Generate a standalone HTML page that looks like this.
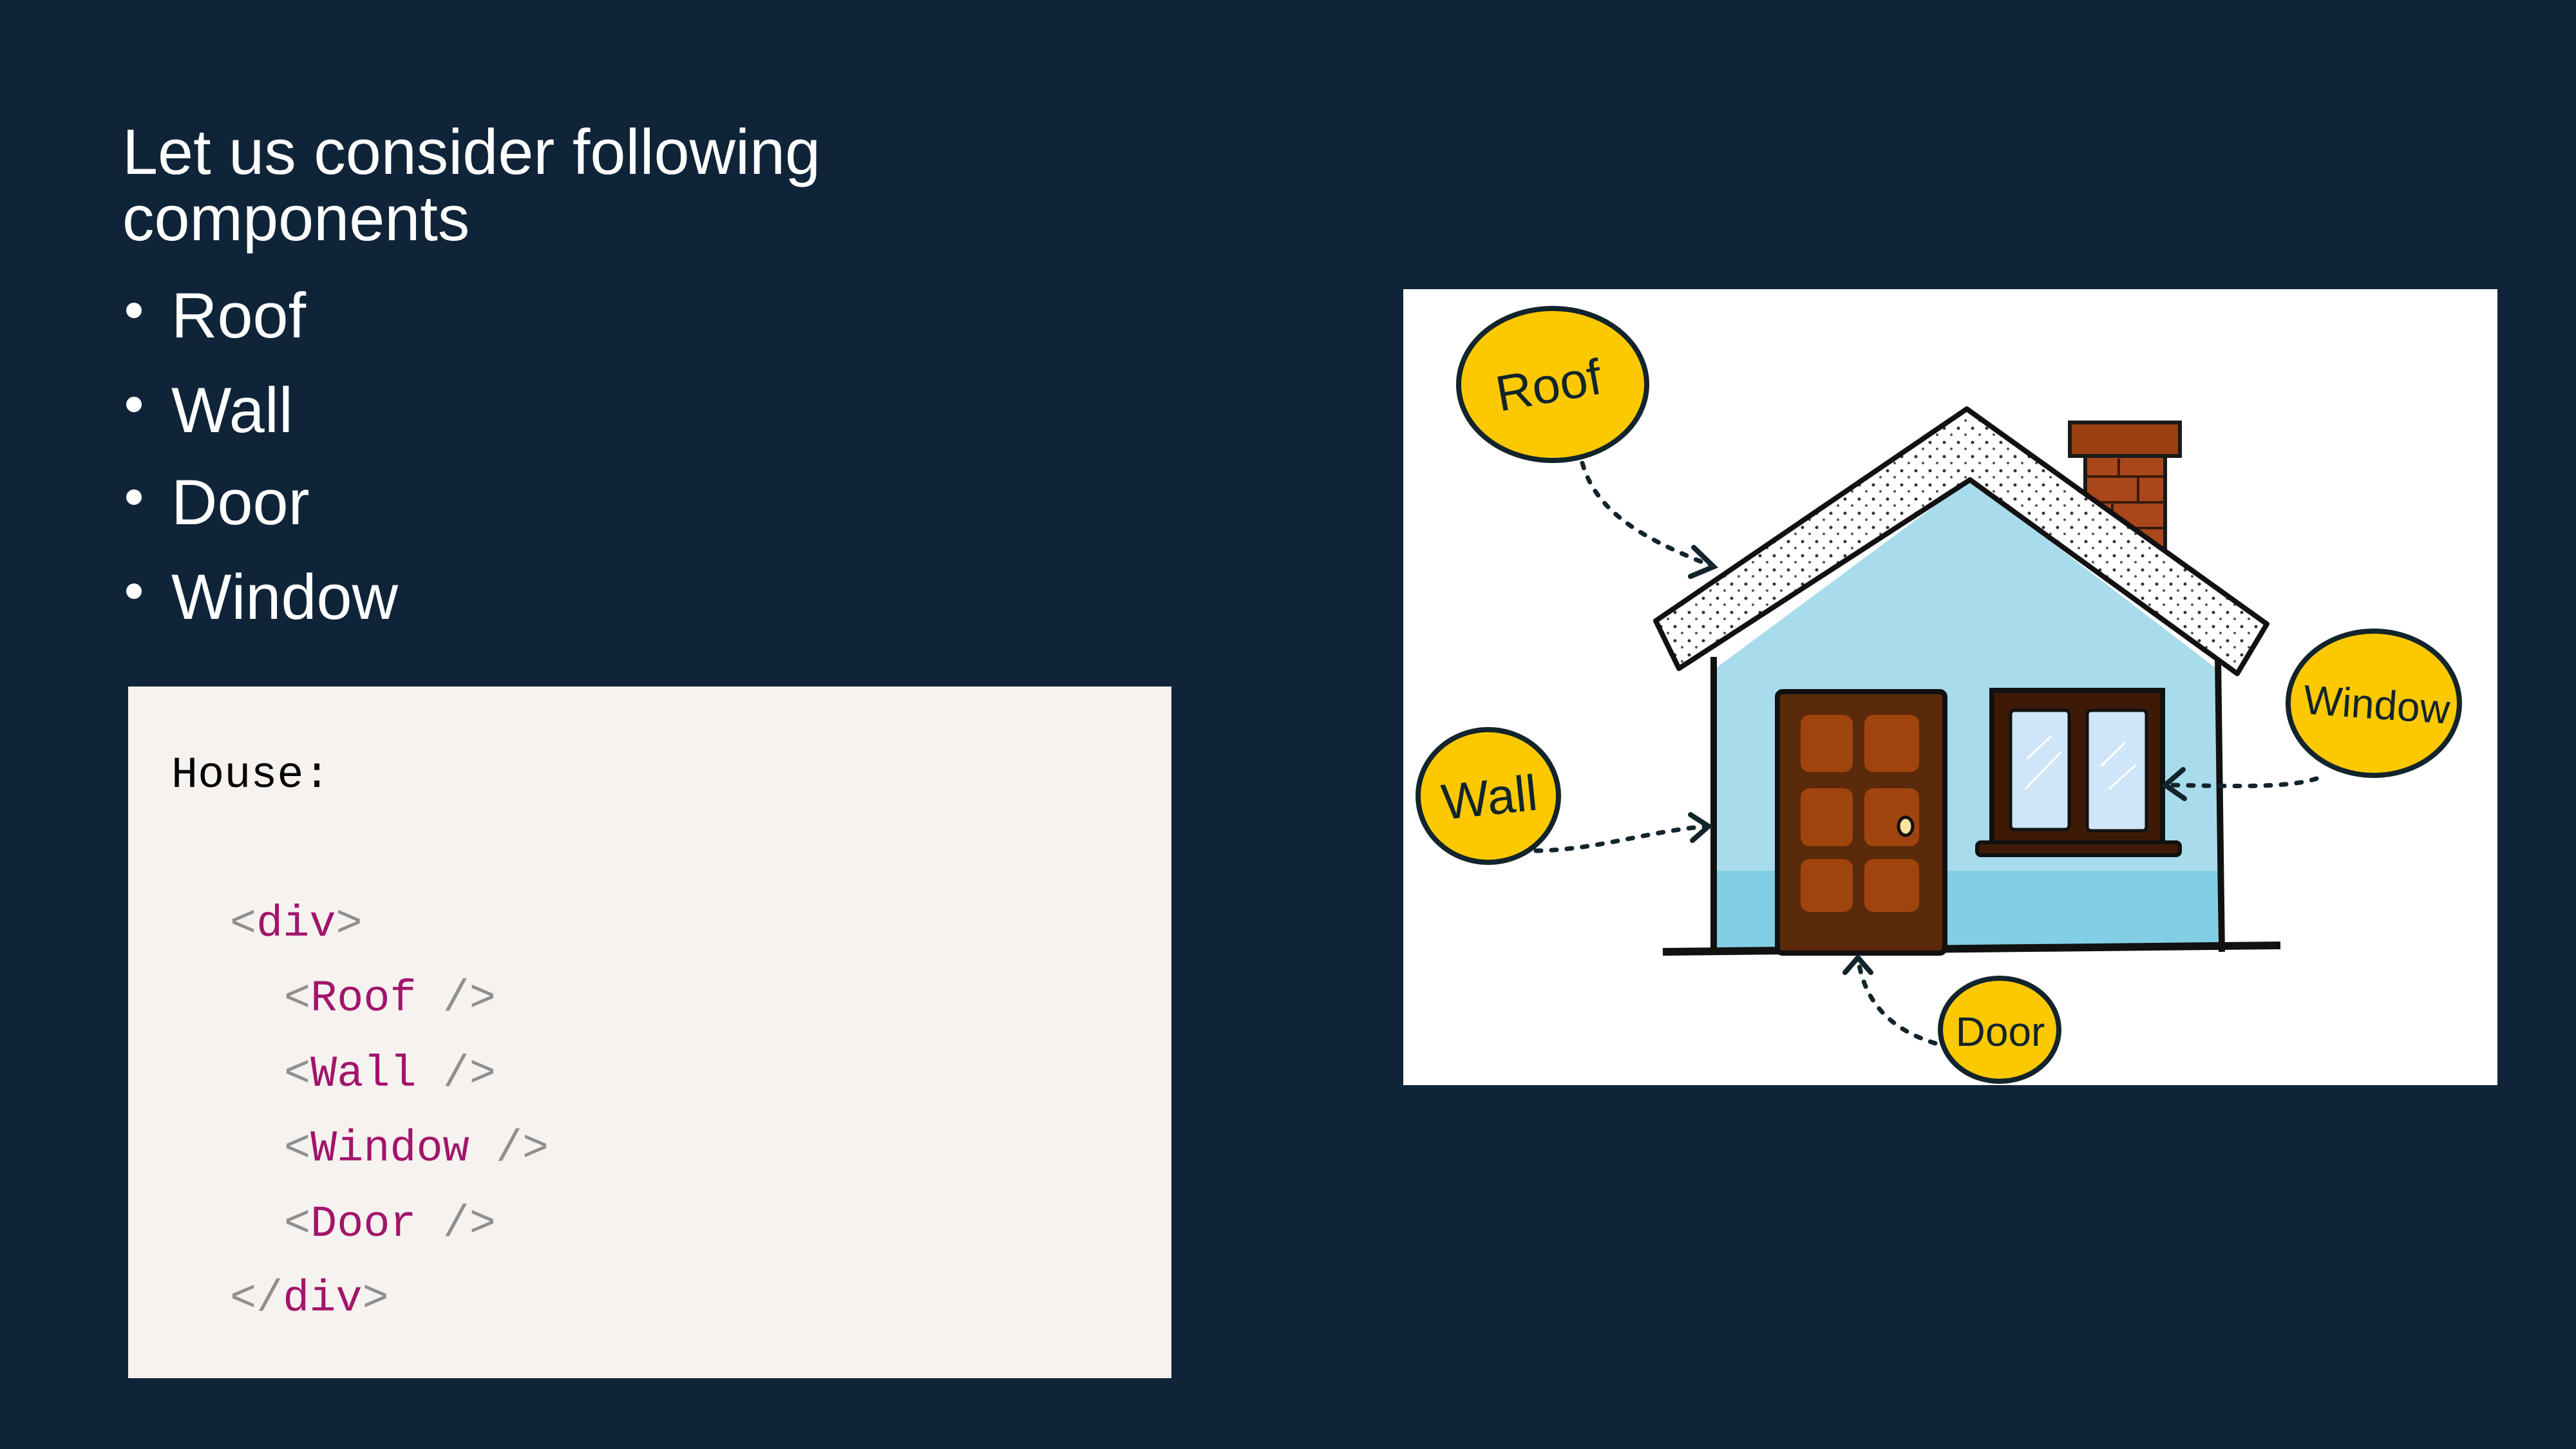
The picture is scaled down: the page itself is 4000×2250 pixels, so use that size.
<!DOCTYPE html>
<html><head><meta charset="utf-8"><style>
html,body{margin:0;padding:0}
body{width:4000px;height:2250px;background:#0f2438;position:relative;overflow:hidden;font-family:"Liberation Sans",sans-serif;color:#fff}
.t{position:absolute;left:190px;font-size:99px;letter-spacing:0;line-height:1;white-space:nowrap}
.b{position:absolute;left:266px;font-size:99px;letter-spacing:0;line-height:1;white-space:nowrap}
.dot{position:absolute;left:196px;width:24px;height:24px;border-radius:50%;background:#fff}
.code{position:absolute;left:199px;top:1066px;width:1620px;height:1074px;background:#f5f2ef}
.c{position:absolute;font-family:"Liberation Mono",monospace;font-size:68.5px;line-height:1;white-space:pre;color:#000}
.g{color:#8f8f8f}.p{color:#a3146b}
</style></head><body>
<div class="t" style="top:186px">Let us consider following</div>
<div class="t" style="top:289px">components</div>
<div class="dot" style="top:470px"></div><div class="b" style="top:440px">Roof</div>
<div class="dot" style="top:616px"></div><div class="b" style="top:587px">Wall</div>
<div class="dot" style="top:760px"></div><div class="b" style="top:730px">Door</div>
<div class="dot" style="top:906px"></div><div class="b" style="top:877px">Window</div>
<div class="code"></div>
<div class="c" style="left:266px;top:1170px">House:</div>
<div class="c" style="left:357px;top:1401px"><span class="g">&lt;</span><span class="p">div</span><span class="g">&gt;</span></div>
<div class="c" style="left:441px;top:1517px"><span class="g">&lt;</span><span class="p">Roof</span><span class="g"> /&gt;</span></div>
<div class="c" style="left:441px;top:1634px"><span class="g">&lt;</span><span class="p">Wall</span><span class="g"> /&gt;</span></div>
<div class="c" style="left:441px;top:1750px"><span class="g">&lt;</span><span class="p">Window</span><span class="g"> /&gt;</span></div>
<div class="c" style="left:441px;top:1867px"><span class="g">&lt;</span><span class="p">Door</span><span class="g"> /&gt;</span></div>
<div class="c" style="left:357px;top:1983px"><span class="g">&lt;/</span><span class="p">div</span><span class="g">&gt;</span></div>

<svg style="position:absolute;left:0;top:0" width="4000" height="2250" viewBox="0 0 4000 2250">
<rect x="2179" y="449" width="1699" height="1236" fill="#fff"/>
<rect x="3238" y="700" width="124" height="160" fill="#a9471a" stroke="#1a1a1a" stroke-width="6"/>
<rect x="3214" y="656" width="171" height="52" fill="#9a3f10" stroke="#1a1a1a" stroke-width="6"/>
<g stroke="#3a1a0a" stroke-width="4"><line x1="3240" y1="740" x2="3360" y2="740"/><line x1="3240" y1="780" x2="3360" y2="780"/><line x1="3240" y1="820" x2="3360" y2="820"/><line x1="3290" y1="712" x2="3290" y2="740"/><line x1="3320" y1="740" x2="3320" y2="780"/><line x1="3280" y1="780" x2="3280" y2="820"/></g>
<polygon points="3059,745 2661,1040 2661,1474 3444,1474 3444,1040" fill="#a8dcec"/>
<rect x="2661" y="1352" width="783" height="122" fill="#82cfe5"/>
<polyline points="2661,1020 2661,1478" stroke="#111" stroke-width="10" fill="none"/>
<polyline points="3444,1020 3450,1478" stroke="#111" stroke-width="10" fill="none"/>
<line x1="2582" y1="1478" x2="3541" y2="1468" stroke="#111" stroke-width="12"/>
<defs><pattern id="dots" width="22" height="22" patternUnits="userSpaceOnUse"><circle cx="5" cy="5" r="2.5" fill="#333"/><circle cx="16" cy="15" r="2" fill="#555"/></pattern></defs>
<polygon points="3054,635 2571,964 2607,1038 3059,745 3474,1046 3520,969" fill="#fff"/>
<polygon points="3054,635 2571,964 2607,1038 3059,745 3474,1046 3520,969" fill="url(#dots)" stroke="#111" stroke-width="8" stroke-linejoin="round"/>
<rect x="2760" y="1074" width="260" height="406" rx="8" fill="#5a2a0a" stroke="#111" stroke-width="8"/>
<g fill="#a0440e"><rect x="2796" y="1110" width="81" height="89" rx="14"/><rect x="2895" y="1110" width="85" height="89" rx="14"/><rect x="2796" y="1224" width="81" height="90" rx="14"/><rect x="2895" y="1224" width="85" height="90" rx="14"/><rect x="2796" y="1334" width="81" height="82" rx="14"/><rect x="2895" y="1334" width="85" height="82" rx="14"/></g>
<ellipse cx="2959" cy="1283" rx="11" ry="14" fill="#fde3a0" stroke="#111" stroke-width="5"/>
<rect x="3093" y="1072" width="265" height="248" fill="#3e1a06" stroke="#111" stroke-width="8"/>
<rect x="3070" y="1308" width="315" height="20" rx="6" fill="#3e1a06" stroke="#111" stroke-width="6"/>
<rect x="3122" y="1103" width="91" height="185" rx="6" fill="#cfe6f8" stroke="#111" stroke-width="5"/>
<rect x="3241" y="1103" width="92" height="187" rx="6" fill="#cfe6f8" stroke="#111" stroke-width="5"/>
<g stroke="#fff" stroke-width="3"><line x1="3148" y1="1178" x2="3185" y2="1143"/><line x1="3145" y1="1225" x2="3200" y2="1168"/><line x1="3262" y1="1190" x2="3300" y2="1153"/><line x1="3275" y1="1225" x2="3316" y2="1188"/></g>
<g stroke="#12242c" stroke-width="8" fill="#fcc900">
<ellipse cx="2411" cy="597" rx="146" ry="118"/>
<ellipse cx="3686" cy="1092" rx="133" ry="112"/>
<ellipse cx="2311" cy="1236" rx="109" ry="103"/>
<ellipse cx="3105" cy="1599" rx="92" ry="80"/>
</g>
<g font-family="'Liberation Sans Narrow','Liberation Sans',sans-serif" fill="#12242c" font-size="78" text-anchor="middle">
<text x="2405" y="625" transform="rotate(-10 2405 600)">Roof</text>
<text x="3690" y="1116" font-size="64" transform="rotate(4 3690 1100)">Window</text>
<text x="2313" y="1265" transform="rotate(-6 2313 1240)">Wall</text>
<text x="3106" y="1624" font-size="64">Door</text>
</g>
<g stroke="#12242c" stroke-width="7" fill="none" stroke-dasharray="8 16" stroke-linecap="round">
<path d="M2457,719 C2480,800 2560,840 2661,880"/>
<path d="M2385,1321 C2480,1320 2560,1290 2653,1283"/>
<path d="M3597,1209 C3550,1225 3450,1220 3362,1219"/>
<path d="M3005,1620 C2940,1600 2895,1560 2885,1487"/>
</g>
<g stroke="#12242c" stroke-width="8" fill="none" stroke-linecap="round">
<path d="M2630,850 L2661,880 L2625,895"/>
<path d="M2625,1265 L2653,1283 L2628,1305"/>
<path d="M3390,1195 L3362,1219 L3392,1240"/>
<path d="M2865,1510 L2885,1487 L2905,1510"/>
</g>
</svg>
</body></html>
